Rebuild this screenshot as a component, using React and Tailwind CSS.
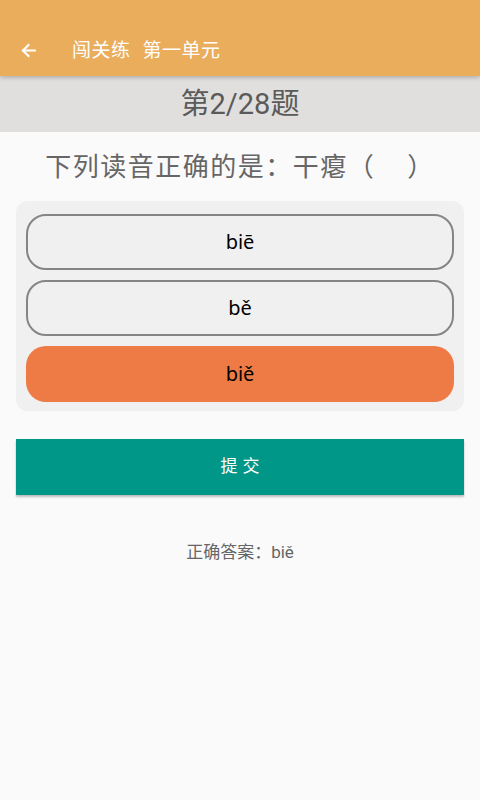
import React, { useState } from 'react';

const options = ['biē', 'bě', 'biě'];

export default function App() {
  const [selected, setSelected] = useState(2);

  return (
    <div className="w-[480px] h-[800px] bg-[#fafafa] flex flex-col" style={{ fontFamily: 'Roboto, "Noto Sans CJK SC", sans-serif' }}>
      <div className="h-[76px] bg-[#eaad5c] flex items-end pb-[13px] shadow-[0_2px_4px_rgba(0,0,0,0.2)] z-10">
        <div className="flex items-center h-[26px]">
          <svg className="ml-[19px]" width="19" height="19" viewBox="0 0 24 24" fill="none" stroke="white" strokeWidth="2.6" strokeLinecap="square">
            <path d="M20 12H5" />
            <path d="M12 5l-7 7 7 7" />
          </svg>
          <span className="ml-[34px] text-white text-[19px] leading-none tracking-[0.5px]">闯关练</span>
          <span className="ml-[12px] text-white text-[19px] leading-none tracking-[0.5px]">第一单元</span>
        </div>
      </div>

      <div className="h-[56px] bg-[#e0dfdd] flex items-center justify-center">
        <span className="text-[29px] text-[#5a5a5a] leading-none">第2/28题</span>
      </div>

      <div className="h-[69px] flex items-center justify-center">
        <span className="text-[26px] text-[#666] leading-none tracking-[1.5px] whitespace-pre">下列读音正确的是：干瘪（    ）</span>
      </div>

      <div className="mx-[16px] bg-[#f0f0f0] rounded-[12px] px-[10px] pt-[13px] pb-[9px] flex flex-col gap-[10px]">
        {options.map((o, i) => (
          <button
            key={o}
            onClick={() => setSelected(i)}
            className={
              selected === i
                ? 'h-[56px] rounded-[20px] bg-[#ee7b45] text-black text-[20px] flex items-center justify-center'
                : 'h-[56px] rounded-[20px] border-2 border-[#858585] bg-[#f0f0f0] text-black text-[20px] flex items-center justify-center'
            }
            style={{ fontFamily: '"Noto Sans", sans-serif' }}
          >
            {o}
          </button>
        ))}
      </div>

      <button className="mx-[16px] mt-[28px] h-[56px] bg-[#009688] text-white text-[17px] shadow-[0_2px_2px_rgba(0,0,0,0.25)] flex items-center justify-center">
        <span>提</span>
        <span className="ml-[5px]">交</span>
      </button>

      <div className="mt-[45px] text-center text-[17px] text-[#666]">正确答案：biě</div>
    </div>
  );
}
